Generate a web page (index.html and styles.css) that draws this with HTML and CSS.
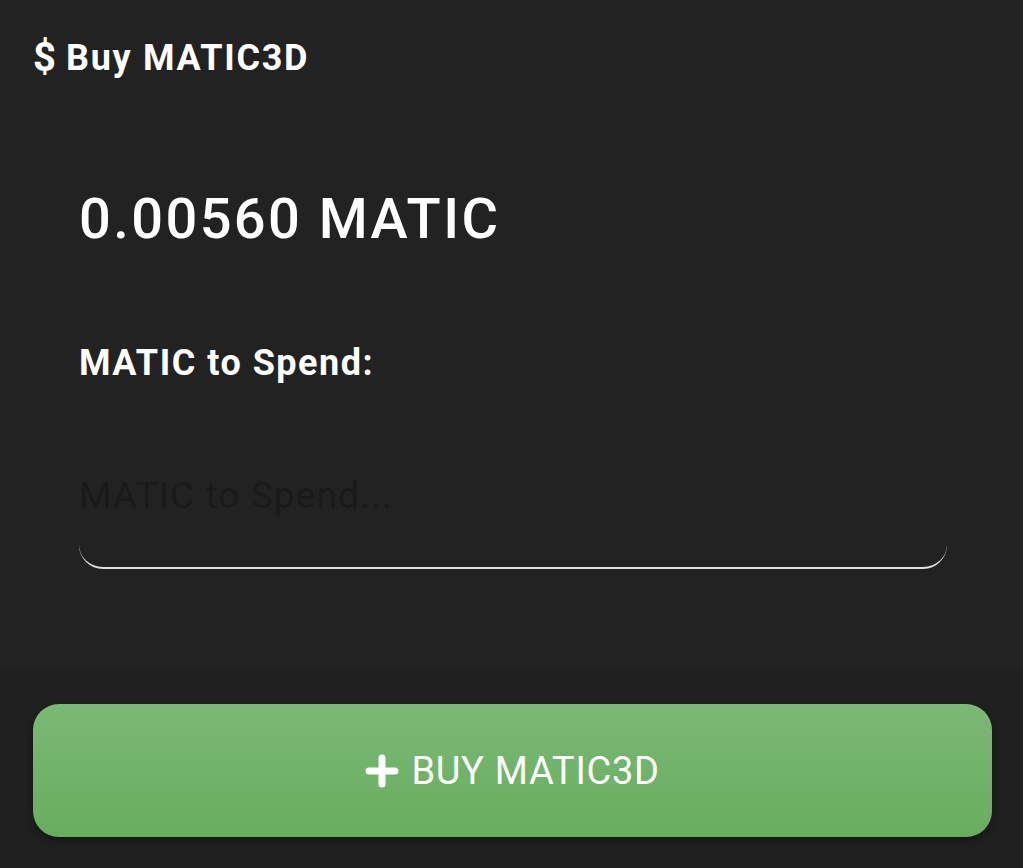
FILE: index.html
```html
<!DOCTYPE html>
<html>
<head>
<meta charset="utf-8">
<link rel="stylesheet" href="styles.css">
</head>
<body>
<div class="app">
  <header class="topbar">
    <span class="dollar">$</span>
    <span class="title">Buy MATIC3D</span>
  </header>
  <main class="content">
    <div class="amount">0.00560 MATIC</div>
    <label class="label" for="spend">MATIC to Spend:</label>
    <input id="spend" class="field" type="text" placeholder="MATIC to Spend...">
  </main>
  <footer class="footer">
    <button class="buy">
      <svg class="plus" width="34" height="34" viewBox="0 0 34 34"><path d="M17 4 V30 M4 17 H30" stroke="#fff" stroke-width="7" stroke-linecap="round"/></svg>
      <span>BUY MATIC3D</span>
    </button>
  </footer>
</div>
</body>
</html>
```
FILE: styles.css
```css
html, body {
  margin: 0;
  padding: 0;
  background: #222222;
  font-family: Roboto, "Noto Sans", sans-serif;
  color: #fff;
}
.app {
  display: flex;
  flex-direction: column;
  height: 868px;
}
.topbar {
  display: flex;
  align-items: center;
  gap: 10px;
  padding: 38px 33px 0;
  height: 40px;
  font-size: 36px;
  line-height: 40px;
  font-weight: 700;
}
.title {
  letter-spacing: 1.7px;
}
.dollar {
  font-size: 40px;
  font-weight: 700;
}
.content {
  flex: 1;
  display: flex;
  flex-direction: column;
  padding: 0 76px 0 79px;
}
.amount {
  margin-top: 108px;
  font-size: 56px;
  line-height: 66px;
  font-weight: 500;
  letter-spacing: 2.4px;
}
.label {
  margin-top: 91px;
  font-size: 36px;
  line-height: 40px;
  font-weight: 700;
  letter-spacing: 1.5px;
}
.field {
  margin-top: 84px;
  box-sizing: border-box;
  width: 100%;
  height: 102px;
  padding: 0 0 44px;
  background: transparent;
  border: none;
  border-bottom: 2px solid #e0e0e0;
  border-radius: 0 0 24px 24px;
  font-family: Roboto, sans-serif;
  font-size: 37px;
  letter-spacing: 1.1px;
  color: #fff;
  outline: none;
}
.field::placeholder {
  color: #1a1a1a;
}
.footer {
  background: #202020;
  padding: 37px 31px 31px 33px;
}
.buy {
  width: 100%;
  height: 133px;
  display: flex;
  align-items: center;
  justify-content: center;
  gap: 12px;
  border: none;
  border-radius: 26px;
  background: linear-gradient(#7bb976, #68ad5e);
  box-shadow: 0 4px 10px rgba(0,0,0,0.35);
  color: #fff;
  font-family: Roboto, sans-serif;
  font-size: 38px;
  font-weight: 400;
  letter-spacing: 0.7px;
}
.plus {
  display: block;
}
```
